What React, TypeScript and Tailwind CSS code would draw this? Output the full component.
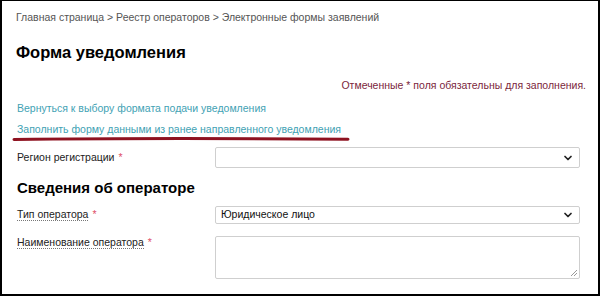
import { ChevronDown } from 'lucide-react';

function Req() {
  return <span className="text-[#e0506a] ml-1">*</span>;
}

export default function App() {
  return (
    <div className="w-[600px] h-[296px] bg-white border-l-2 border-r-2 border-b-2 border-t border-black overflow-hidden font-['Liberation_Sans',Arial,sans-serif]">
      {/* Breadcrumbs */}
      <div className="pl-[14px] pt-[8px] text-[10.5px] leading-[16px] text-[#555]">
        Главная страница &gt; Реестр операторов &gt; Электронные формы заявлений
      </div>

      <h1 className="pl-[14px] mt-[16px] text-[16.5px] leading-[22px] font-bold text-black">Форма уведомления</h1>

      <div className="pr-[12px] mt-[14px] text-right text-[10.5px] leading-[16px] text-[#7b1f3c]">
        Отмеченные * поля обязательны для заполнения.
      </div>

      {/* Links */}
      <div className="relative pl-[15px] mt-[5px] text-[10.5px] leading-[21px] text-[#42a2b4]">
        <div>Вернуться к выбору формата подачи уведомления</div>
        <div>Заполнить форму данными из ранее направленного уведомления</div>
        <svg className="absolute left-[10px] top-[38px]" width="340" height="6" viewBox="0 0 340 6">
          <path d="M2 3.5 C 80 2.5, 200 2.2, 336 3.2" stroke="#8e1220" strokeWidth="3" strokeLinecap="round" fill="none" />
        </svg>
      </div>

      {/* Form */}
      <div className="pl-[15px] pr-[18px] mt-[7px] text-[10.5px] text-[#222]">
        <div className="flex items-center">
          <div className="w-[198px]">
            Регион регистрации<Req />
          </div>
          <div className="flex-1 h-[21px] border border-[#cfcfcf] rounded-[2px] flex items-center justify-end pr-[5px]">
            <ChevronDown size={12} strokeWidth={3.5} className="text-[#222]" />
          </div>
        </div>

        <h2 className="mt-[10px] text-[15px] leading-[20px] font-bold text-black">Сведения об операторе</h2>

        <div className="flex items-center mt-[8px]">
          <div className="w-[198px]">
            <span className="border-b border-dotted border-[#777]">Тип оператора</span>
            <Req />
          </div>
          <div className="flex-1 h-[18px] border border-[#cfcfcf] rounded-[2px] flex items-center justify-between pl-[5px] pr-[5px]">
            <span className="text-[10.5px] text-[#111]">Юридическое лицо</span>
            <ChevronDown size={12} strokeWidth={3.5} className="text-[#222]" />
          </div>
        </div>

        <div className="flex items-start mt-[12px]">
          <div className="w-[198px] -mt-[1px]">
            <span className="border-b border-dotted border-[#777]">Наименование оператора</span>
            <Req />
          </div>
          <div className="relative flex-1 h-[43px] border border-[#cfcfcf] rounded-[2px]">
            <svg className="absolute right-[1px] bottom-[1px]" width="8" height="8" viewBox="0 0 8 8">
              <path d="M7 1 L1 7 M7 4 L4 7" stroke="#999" strokeWidth="1" />
            </svg>
          </div>
        </div>
      </div>
    </div>
  );
}
